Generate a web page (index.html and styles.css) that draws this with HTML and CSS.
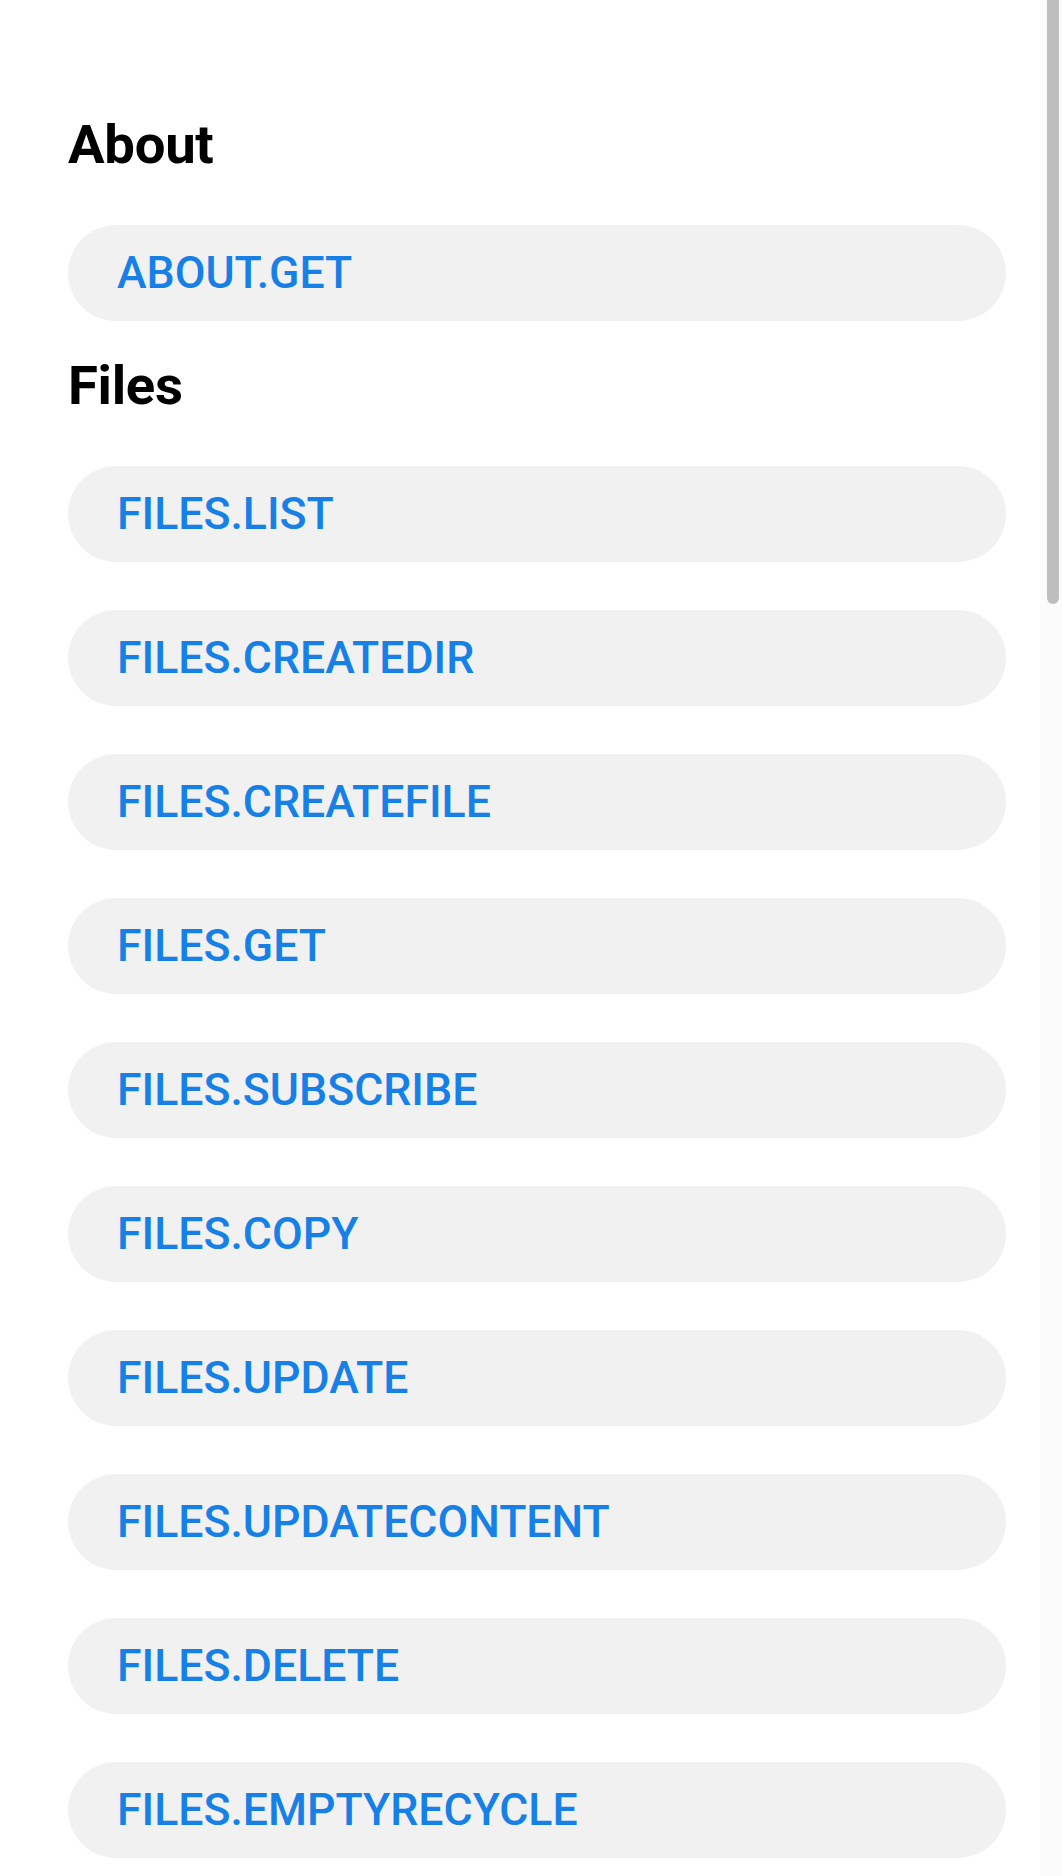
FILE: index.html
```html
<!DOCTYPE html>
<html lang="en">
<head>
<meta charset="utf-8">
<title>API methods</title>
<link rel="stylesheet" href="styles.css">
</head>
<body>
<main class="page">
  <section class="section">
    <h2 class="section-title">About</h2>
    <ul class="method-list">
      <li><a class="method" href="#">ABOUT.GET</a></li>
    </ul>
  </section>
  <section class="section">
    <h2 class="section-title">Files</h2>
    <ul class="method-list">
      <li><a class="method" href="#">FILES.LIST</a></li>
      <li><a class="method" href="#">FILES.CREATEDIR</a></li>
      <li><a class="method" href="#">FILES.CREATEFILE</a></li>
      <li><a class="method" href="#">FILES.GET</a></li>
      <li><a class="method" href="#">FILES.SUBSCRIBE</a></li>
      <li><a class="method" href="#">FILES.COPY</a></li>
      <li><a class="method" href="#">FILES.UPDATE</a></li>
      <li><a class="method" href="#">FILES.UPDATECONTENT</a></li>
      <li><a class="method" href="#">FILES.DELETE</a></li>
      <li><a class="method" href="#">FILES.EMPTYRECYCLE</a></li>
    </ul>
  </section>
</main>
<div class="scroll-track"><div class="scroll-thumb"></div></div>
</body>
</html>
```
FILE: styles.css
```css
html, body {
  margin: 0;
  padding: 0;
  background: #ffffff;
  overflow: hidden;
  height: 1876px;
}

body {
  font-family: Roboto, "Liberation Sans", Arial, sans-serif;
  color: #000;
}

.page {
  padding: 112px 56px 0 68px;
  display: flex;
  flex-direction: column;
  gap: 32px;
}

.section {
  display: flex;
  flex-direction: column;
}

.section-title {
  margin: 0 0 49px 0;
  font-size: 54.5px;
  line-height: 64px;
  font-weight: 700;
  letter-spacing: -0.3px;
}

.method-list {
  list-style: none;
  margin: 0;
  padding: 0;
  display: flex;
  flex-direction: column;
  gap: 48px;
}

.method {
  display: flex;
  align-items: center;
  box-sizing: border-box;
  height: 96px;
  padding: 0 48px 0 49px;
  border-radius: 48px;
  background: #f1f1f1;
  color: #1680e6;
  font-size: 44.6px;
  font-weight: 500;
  text-decoration: none;
}

.scroll-track {
  position: fixed;
  top: 0;
  right: 0;
  width: 22px;
  height: 100%;
  background: #fbfbfb;
}

.scroll-thumb {
  position: absolute;
  top: 0;
  right: 3px;
  width: 12px;
  height: 604px;
  background: #bebebe;
  border-radius: 0 0 6px 6px;
}
```
